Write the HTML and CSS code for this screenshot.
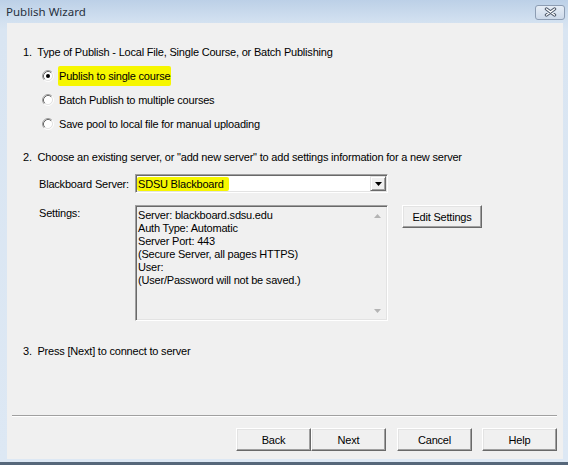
FILE: index.html
```html
<!DOCTYPE html>
<html>
<head>
<meta charset="utf-8">
<title>Publish Wizard</title>
<link rel="stylesheet" href="styles.css">
</head>
<body>
<div class="window">
  <div class="titlebar">
    <span class="title">Publish Wizard</span>
    <div class="close">
      <svg width="13" height="10" viewBox="0 0 13 10">
        <path d="M2.5 2 L10.5 8 M10.5 2 L2.5 8" stroke="#4a5566" stroke-width="3.4" stroke-linecap="round" fill="none"/>
        <path d="M2.5 2 L10.5 8 M10.5 2 L2.5 8" stroke="#ffffff" stroke-width="1.5" stroke-linecap="round" fill="none"/>
      </svg>
    </div>
  </div>
  <div class="client">
    <div class="content">
      <div class="step">1.&nbsp; Type of Publish - Local File, Single Course, or Batch Publishing</div>
      <div class="options">
        <div class="option">
          <svg class="radio" width="12" height="12" viewBox="0 0 12 12">
            <circle cx="6" cy="6" r="4.2" fill="#fff"/>
            <path d="M2.11 9.89 A5.5 5.5 0 0 1 9.89 2.11" stroke="#a0a0a0" fill="none"/>
            <path d="M9.89 2.11 A5.5 5.5 0 0 1 2.11 9.89" stroke="#ffffff" fill="none"/>
            <path d="M2.82 9.18 A4.5 4.5 0 0 1 9.18 2.82" stroke="#696969" fill="none"/>
            <path d="M9.18 2.82 A4.5 4.5 0 0 1 2.82 9.18" stroke="#e3e3e3" fill="none"/>
            <circle cx="6" cy="6" r="2" fill="#000"/>
          </svg>
          <span class="label hl">Publish to single course</span>
        </div>
        <div class="option">
          <svg class="radio" width="12" height="12" viewBox="0 0 12 12">
            <circle cx="6" cy="6" r="4.2" fill="#fff"/>
            <path d="M2.11 9.89 A5.5 5.5 0 0 1 9.89 2.11" stroke="#a0a0a0" fill="none"/>
            <path d="M9.89 2.11 A5.5 5.5 0 0 1 2.11 9.89" stroke="#ffffff" fill="none"/>
            <path d="M2.82 9.18 A4.5 4.5 0 0 1 9.18 2.82" stroke="#696969" fill="none"/>
            <path d="M9.18 2.82 A4.5 4.5 0 0 1 2.82 9.18" stroke="#e3e3e3" fill="none"/>
          </svg>
          <span class="label">Batch Publish to multiple courses</span>
        </div>
        <div class="option">
          <svg class="radio" width="12" height="12" viewBox="0 0 12 12">
            <circle cx="6" cy="6" r="4.2" fill="#fff"/>
            <path d="M2.11 9.89 A5.5 5.5 0 0 1 9.89 2.11" stroke="#a0a0a0" fill="none"/>
            <path d="M9.89 2.11 A5.5 5.5 0 0 1 2.11 9.89" stroke="#ffffff" fill="none"/>
            <path d="M2.82 9.18 A4.5 4.5 0 0 1 9.18 2.82" stroke="#696969" fill="none"/>
            <path d="M9.18 2.82 A4.5 4.5 0 0 1 2.82 9.18" stroke="#e3e3e3" fill="none"/>
          </svg>
          <span class="label">Save pool to local file for manual uploading</span>
        </div>
      </div>
      <div class="step step2">2.&nbsp; Choose an existing server, or "add new server" to add settings information for a new server</div>
      <div class="field-row server-row">
        <span class="field-label">Blackboard Server:</span>
        <div class="combo">
          <span class="combo-text hl">SDSU Blackboard</span>
          <div class="combo-btn">
            <svg width="7" height="4" viewBox="0 0 7 4"><path d="M0 0 H7 L3.5 4 Z" fill="#000"/></svg>
          </div>
        </div>
      </div>
      <div class="field-row settings-row">
        <span class="field-label settings-label">Settings:</span>
        <div class="textbox">
          <div class="textbox-lines">
            <div>Server: blackboard.sdsu.edu</div>
            <div>Auth Type: Automatic</div>
            <div>Server Port: 443</div>
            <div>(Secure Server, all pages HTTPS)</div>
            <div>User:</div>
            <div>(User/Password will not be saved.)</div>
          </div>
          <div class="vscroll">
            <div class="sb-btn"><svg width="7" height="4" viewBox="0 0 7 4"><path d="M0 4 H7 L3.5 0 Z" fill="#b4b4b4"/></svg></div>
            <div class="sb-btn"><svg width="7" height="4" viewBox="0 0 7 4"><path d="M0 0 H7 L3.5 4 Z" fill="#b4b4b4"/></svg></div>
          </div>
        </div>
        <button class="btn edit-btn">Edit Settings</button>
      </div>
      <div class="step step3">3.&nbsp; Press [Next] to connect to server</div>
    </div>
    <div class="footer">
      <div class="separator"></div>
      <div class="buttons">
        <button class="btn nav-btn">Back</button>
        <button class="btn nav-btn">Next</button>
        <button class="btn nav-btn cancel-btn">Cancel</button>
        <button class="btn nav-btn help-btn">Help</button>
      </div>
    </div>
  </div>
</div>
</body>
</html>
```

FILE: styles.css
```css
html, body {
  margin: 0;
  padding: 0;
}

body {
  width: 568px;
  height: 465px;
  overflow: hidden;
  font-family: "Liberation Sans", Arial, sans-serif;
  font-size: 11px;
  letter-spacing: -0.2px;
  color: #000;
}

.window {
  width: 568px;
  height: 465px;
  box-sizing: border-box;
  display: flex;
  flex-direction: column;
  background: linear-gradient(#c6d7ea, #d9e5f2 30px, #dde8f4);
  border-bottom: 3px solid #56677a;
}

.titlebar {
  flex: none;
  height: 23px;
  display: flex;
  align-items: center;
  justify-content: space-between;
  padding: 0 3px 0 6px;
  background: linear-gradient(#bcd0e7, #d4e2f1);
}

.title {
  font-family: "Noto Sans", "Liberation Sans", sans-serif;
  font-size: 11.5px;
  letter-spacing: 0;
  color: #27313d;
}

.close {
  width: 30px;
  height: 15px;
  box-sizing: border-box;
  border: 1px solid #8d9db3;
  border-radius: 3px;
  background: linear-gradient(#e6edf6, #cddaea);
  display: flex;
  align-items: center;
  justify-content: center;
  margin-top: 1px;
}

.client {
  flex: 1;
  margin: 0 5px 3px 7px;
  background: #f0f0f0;
  display: flex;
  flex-direction: column;
}

.content {
  padding: 22px 0 0 16px;
}

.step {
  height: 14px;
  line-height: 14px;
  white-space: nowrap;
}

.options {
  margin: 5px 0 0 19px;
}

.option {
  height: 24px;
  display: flex;
  align-items: center;
  gap: 5px;
}

.radio {
  flex: none;
  margin-top: -1px;
}

.label {
  line-height: 14px;
  white-space: nowrap;
}

.hl {
  background: #f6f600;
  line-height: 20px;
  padding: 0 1px;
  margin-left: -1px;
  border-radius: 2px;
}

.step2 {
  margin-top: 14px;
}

.field-row {
  display: flex;
  margin-left: 16px;
}

.field-label {
  width: 96px;
  flex: none;
  line-height: 14px;
  white-space: nowrap;
}

.server-row {
  margin-top: 10px;
  align-items: center;
  height: 19px;
}

.combo {
  width: 253px;
  height: 19px;
  box-sizing: border-box;
  border: 1px solid;
  border-color: #a0a0a0 #ffffff #ffffff #a0a0a0;
  box-shadow: inset 1px 1px #696969, inset -1px -1px #e3e3e3;
  background: #fff;
  padding: 1px;
  display: flex;
  align-items: center;
  justify-content: space-between;
}

.combo-text {
  line-height: 14px;
  margin-left: 0;
  padding: 0 5px 0 1px;
}

.combo-btn {
  width: 16px;
  height: 15px;
  box-sizing: border-box;
  border: 1px solid;
  border-color: #e3e3e3 #696969 #696969 #e3e3e3;
  box-shadow: inset 1px 1px #fff, inset -1px -1px #a0a0a0;
  background: #f0f0f0;
  display: flex;
  align-items: center;
  justify-content: center;
}

.settings-row {
  margin-top: 12px;
  align-items: flex-start;
}

.settings-label {
  padding-top: 1px;
}

.textbox {
  width: 253px;
  height: 116px;
  box-sizing: border-box;
  border: 1px solid;
  border-color: #a0a0a0 #ffffff #ffffff #a0a0a0;
  box-shadow: inset 1px 1px #696969, inset -1px -1px #e3e3e3;
  background: #f0f0f0;
  padding: 1px;
  display: flex;
}

.textbox-lines {
  flex: 1;
  padding: 2px 0 0 1px;
  line-height: 13px;
  white-space: nowrap;
}

.vscroll {
  width: 17px;
  flex: none;
  display: flex;
  flex-direction: column;
  justify-content: space-between;
}

.sb-btn {
  width: 17px;
  height: 17px;
  display: flex;
  align-items: center;
  justify-content: center;
}

.btn {
  font-family: "Liberation Sans", Arial, sans-serif;
  font-size: 11px;
  letter-spacing: -0.2px;
  color: #000;
  background: #f0f0f0;
  border: 1px solid;
  border-color: #ffffff #696969 #696969 #ffffff;
  box-shadow: inset -1px -1px #a0a0a0, inset 1px 1px #e3e3e3;
  padding: 0;
  margin: 0;
  height: 23px;
  box-sizing: border-box;
}

.edit-btn {
  width: 80px;
  margin-left: 14px;
}

.step3 {
  margin-top: 23px;
}

.footer {
  margin-top: auto;
  padding: 0 6px 8px 5px;
}

.separator {
  height: 1px;
  background: #a0a0a0;
  border-bottom: 1px solid #ffffff;
}

.buttons {
  display: flex;
  justify-content: flex-end;
  margin-top: 11px;
}

.nav-btn {
  width: 75px;
}

.cancel-btn {
  margin-left: 11px;
}

.help-btn {
  margin-left: 10px;
}
```
